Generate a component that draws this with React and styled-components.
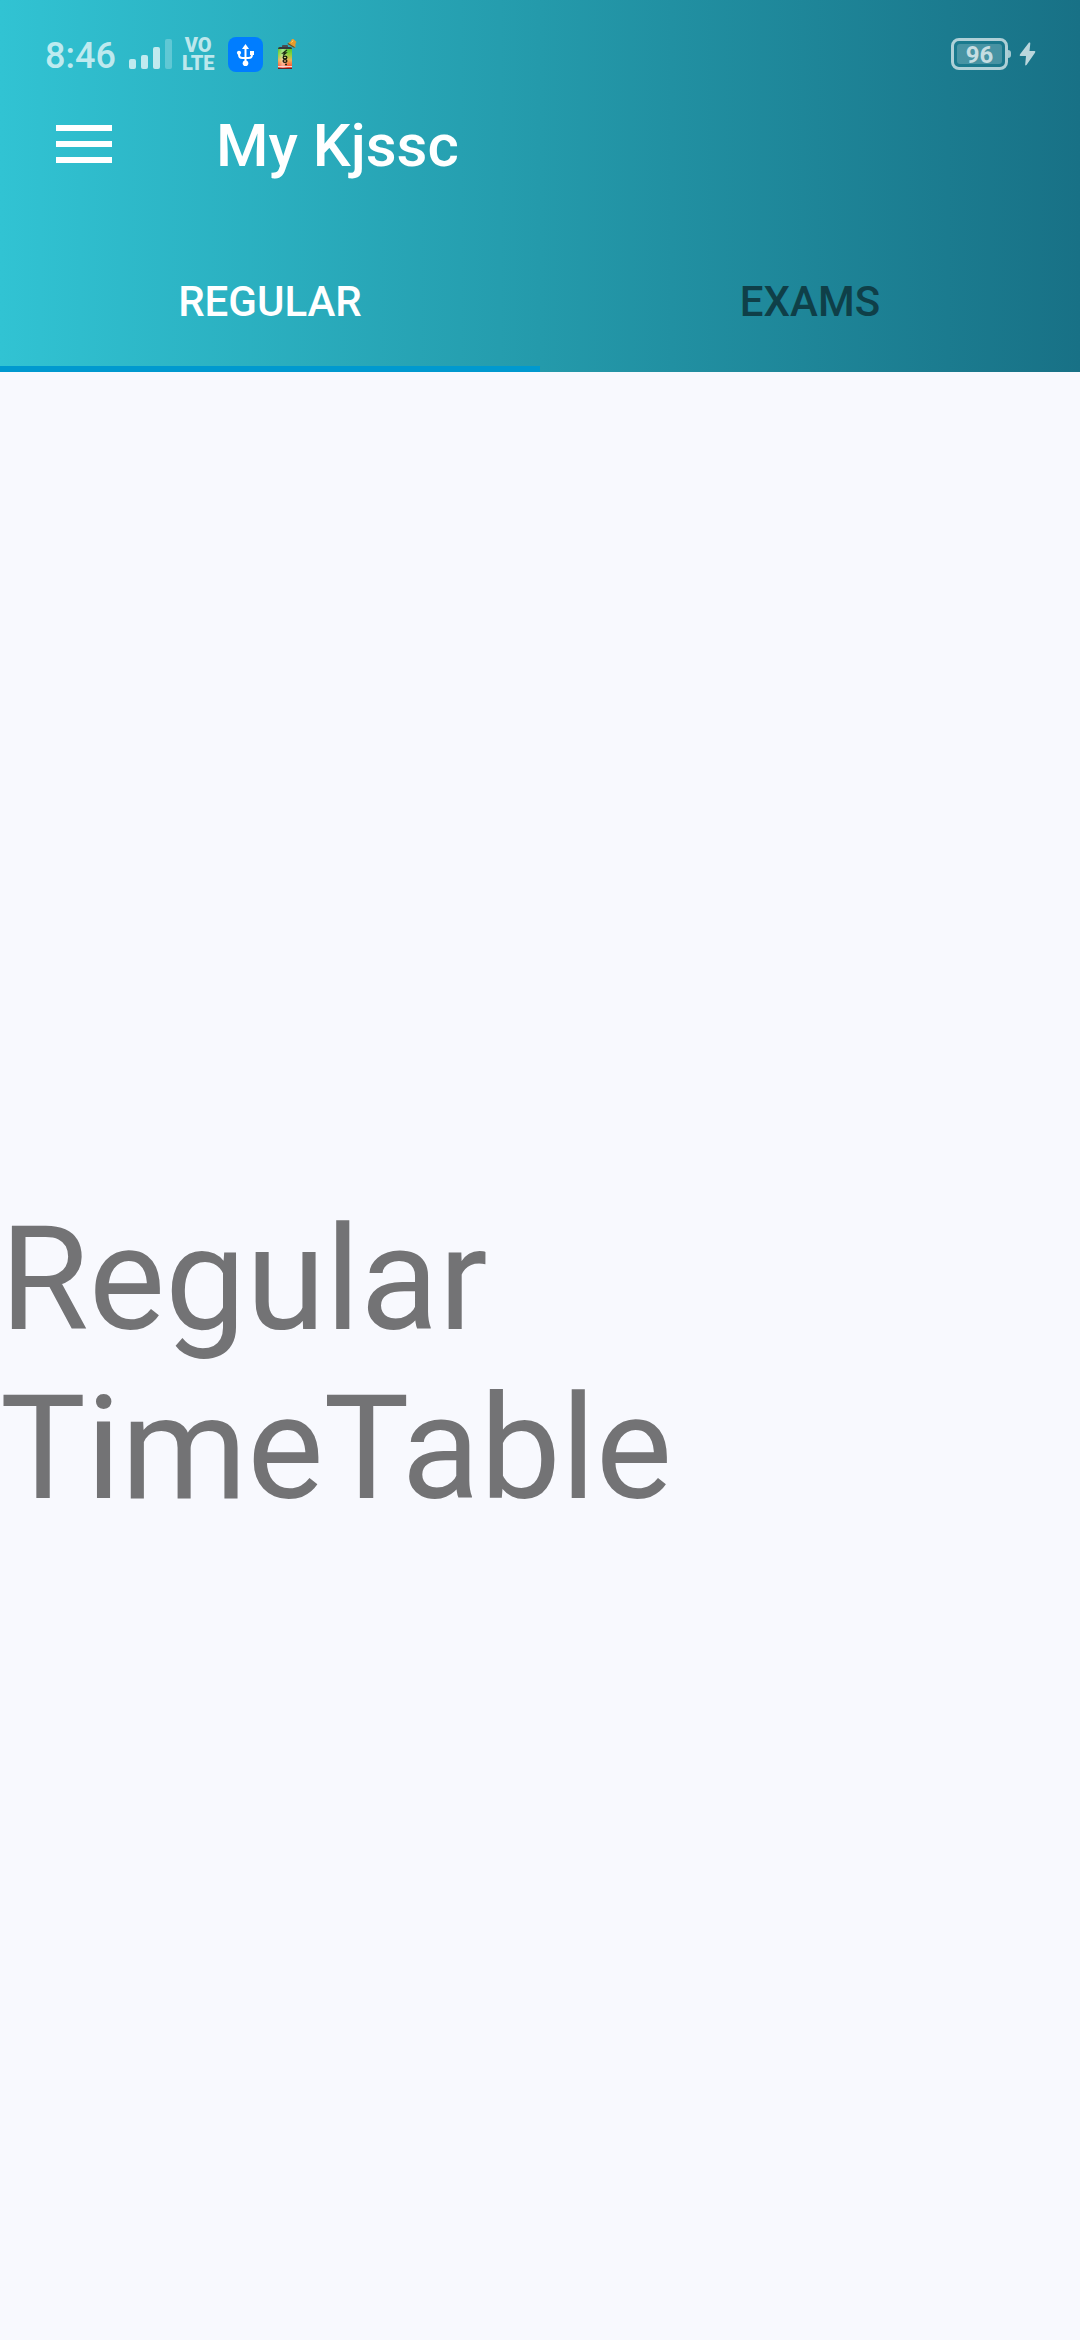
import React, { useState } from "react";
import styled, { createGlobalStyle } from "styled-components";

const GlobalStyle = createGlobalStyle`
  * { box-sizing: border-box; }
  html, body, #root { height: 100%; }
  body {
    margin: 0;
    background: #f8f9fe;
    font-family: Roboto, "Noto Sans", sans-serif;
  }
`;

const Screen = styled.div`
  display: flex;
  flex-direction: column;
  min-height: 100%;
`;

const Header = styled.header`
  background: linear-gradient(90deg, #31c3d3 0%, #249aab 50%, #187186 100%);
`;

const StatusBar = styled.div`
  display: flex;
  align-items: center;
  justify-content: space-between;
  height: 60px;
  padding: 48px 44px 0 45px;
  color: rgba(255, 255, 255, 0.7);
`;

const StatusGroup = styled.div`
  display: flex;
  align-items: center;
  height: 36px;
  gap: ${(p) => p.$gap}px;
`;

const Clock = styled.time`
  padding-top: 4px;
  font-size: 36px;
  font-weight: 500;
  line-height: 36px;
`;

const Network = styled.span`
  display: flex;
  flex-direction: column;
  align-items: center;
  font-size: 20px;
  font-weight: 900;
  line-height: 18px;
`;

const Battery = styled.span`
  display: flex;
  align-items: center;
`;

const BatteryShell = styled.span`
  display: flex;
  width: 57px;
  height: 32px;
  padding: 3px;
  border: 3px solid rgba(255, 255, 255, 0.65);
  border-radius: 8px;
`;

const BatteryLevel = styled.span`
  flex: 1;
  border-radius: 3px;
  background: rgba(255, 255, 255, 0.2);
  font-size: 24px;
  font-weight: 700;
  line-height: 22px;
  text-align: center;
`;

const BatteryTip = styled.span`
  width: 3px;
  height: 8px;
  border-radius: 0 3px 3px 0;
  background: rgba(255, 255, 255, 0.6);
`;

const Toolbar = styled.div`
  display: flex;
  align-items: center;
  gap: 100px;
  height: 168px;
  padding: 0 52px;
`;

const MenuButton = styled.button`
  display: flex;
  padding: 0 4px;
  border: 0;
  background: none;
  cursor: pointer;
`;

const Title = styled.h1`
  margin: 0;
  padding-top: 4px;
  color: #fff;
  font-size: 60px;
  font-weight: 500;
  line-height: 72px;
`;

const Tabs = styled.div`
  display: flex;
`;

const Tab = styled.button`
  flex: 1;
  height: 144px;
  padding: 8px 0 0;
  border: 0;
  border-bottom: 6px solid ${(p) => (p.$active ? "#0099cf" : "transparent")};
  background: none;
  color: ${(p) => (p.$active ? "#fff" : "#0f3f48")};
  font-family: inherit;
  font-size: 42px;
  font-weight: 500;
  text-transform: uppercase;
  cursor: pointer;
`;

const Panel = styled.main`
  display: flex;
  flex: 1;
  align-items: center;
  padding-top: 15px;
`;

const Message = styled.p`
  margin: 0;
  color: #737375;
  font-size: 144px;
  line-height: 169px;
`;

const SignalIcon = () => (
  <svg width="43" height="30" viewBox="0 0 43 30" fill="currentColor" aria-hidden="true">
    <rect x="0" y="20" width="7" height="10" rx="2" />
    <rect x="12" y="16" width="7" height="14" rx="2" />
    <rect x="24" y="8" width="7" height="22" rx="2" />
    <rect x="36" y="0" width="7" height="30" rx="2" opacity="0.35" />
  </svg>
);

const UsbIcon = () => (
  <svg width="35" height="35" viewBox="0 0 35 35" aria-hidden="true">
    <rect width="35" height="35" rx="8" fill="#007dff" />
    <g fill="none" stroke="#fff" strokeWidth="2">
      <path d="M17.500 10v16" />
      <path d="M11 16v1.500q0 3.500 3.500 3.500h6q3.500 0 3.500-3.500V16" />
    </g>
    <g fill="#fff">
      <path d="M17.500 7l3.500 5h-7z" />
      <circle cx="17.500" cy="26.300" r="2.800" />
      <circle cx="11" cy="15.800" r="2.100" />
      <rect x="22" y="14" width="4" height="4" />
    </g>
  </svg>
);

const AlarmBatteryIcon = () => (
  <svg width="22" height="32" viewBox="-2 0 22 32" aria-hidden="true">
    <defs>
      <linearGradient id="charge" x1="0" y1="0" x2="0" y2="1">
        <stop offset="0" stopColor="#3fc42c" />
        <stop offset="0.35" stopColor="#8fd23c" />
        <stop offset="0.6" stopColor="#f0b055" />
        <stop offset="0.85" stopColor="#f8603c" />
        <stop offset="1" stopColor="#e8302c" />
      </linearGradient>
      <linearGradient id="sheen" x1="0" y1="0" x2="1" y2="0">
        <stop offset="0" stopColor="#fff" stopOpacity="0" />
        <stop offset="0.35" stopColor="#fff" stopOpacity="0.45" />
        <stop offset="0.7" stopColor="#fff" stopOpacity="0" />
      </linearGradient>
    </defs>
    <rect x="4" y="7" width="6" height="3" rx="1" fill="#4a4e50" />
    <rect x="0" y="9" width="14" height="22" rx="2" fill="url(#charge)" />
    <rect x="0" y="9" width="14" height="22" rx="2" fill="url(#sheen)" />
    <path d="M0 11q0-2 2-2h10q2 0 2 2z" fill="#34383c" />
    <rect x="0" y="28" width="14" height="1" fill="#f5d5cf" />
    <rect x="0" y="30" width="14" height="1" fill="#6a2020" />
    <path d="M9 12l-4 3h3l-3 2.500M7 26.500h2" fill="none" stroke="#1c2a12" strokeWidth="1.300" />
    <ellipse cx="7" cy="19.500" rx="1.900" ry="1.400" fill="none" stroke="#14180c" strokeWidth="1.300" />
    <ellipse cx="7" cy="23" rx="1.900" ry="1.400" fill="none" stroke="#14180c" strokeWidth="1.300" />
    <path d="M10 5q3-1 4-4l1.500 0 3 3q-1.500 1-1 5.500z" fill="#e79b2c" />
    <path d="M10 5l7.500 4.500-2 0-6-3.500z" fill="#7d4510" />
    <path d="M13.500 4.500l1.500-2" stroke="#ffe07a" strokeWidth="1" />
  </svg>
);

const BoltIcon = () => (
  <svg width="17" height="24" viewBox="0 0 17 24" fill="currentColor" aria-hidden="true">
    <path d="M10 0.500Q11.500 0 11.300 1.500L10.500 9H15.500Q17 9.300 16 10.800L7.500 23Q6 24 6.200 22.500L7 14H1.500Q0 13.700 1 12.300Z" />
  </svg>
);

const MenuIcon = () => (
  <svg width="56" height="38" viewBox="0 0 56 38" fill="#fff" aria-hidden="true">
    <path d="M0 0h56v6H0zM0 16h56v6H0zM0 32h56v6H0z" />
  </svg>
);

const TABS = [
  { id: "regular", label: "Regular", text: "Regular TimeTable" },
  { id: "exams", label: "Exams", text: "Exams TimeTable" },
];

export default function App() {
  const [active, setActive] = useState("regular");
  const current = TABS.find((tab) => tab.id === active);

  return (
    <Screen>
      <GlobalStyle />
      <Header>
        <StatusBar>
          <StatusGroup $gap={13}>
            <Clock>8:46</Clock>
            <StatusGroup $gap={10}>
              <SignalIcon />
              <Network>
                <span>VO</span>
                <span>LTE</span>
              </Network>
            </StatusGroup>
            <UsbIcon />
            <AlarmBatteryIcon />
          </StatusGroup>
          <StatusGroup $gap={8}>
            <Battery>
              <BatteryShell>
                <BatteryLevel>96</BatteryLevel>
              </BatteryShell>
              <BatteryTip />
            </Battery>
            <BoltIcon />
          </StatusGroup>
        </StatusBar>
        <Toolbar>
          <MenuButton type="button" aria-label="Open menu">
            <MenuIcon />
          </MenuButton>
          <Title>My Kjssc</Title>
        </Toolbar>
        <Tabs role="tablist">
          {TABS.map((tab) => (
            <Tab
              key={tab.id}
              id={`tab-${tab.id}`}
              type="button"
              role="tab"
              aria-selected={tab.id === active}
              aria-controls="timetable"
              $active={tab.id === active}
              onClick={() => setActive(tab.id)}
            >
              {tab.label}
            </Tab>
          ))}
        </Tabs>
      </Header>
      <Panel id="timetable" role="tabpanel" aria-labelledby={`tab-${active}`}>
        <Message>{current.text}</Message>
      </Panel>
    </Screen>
  );
}
